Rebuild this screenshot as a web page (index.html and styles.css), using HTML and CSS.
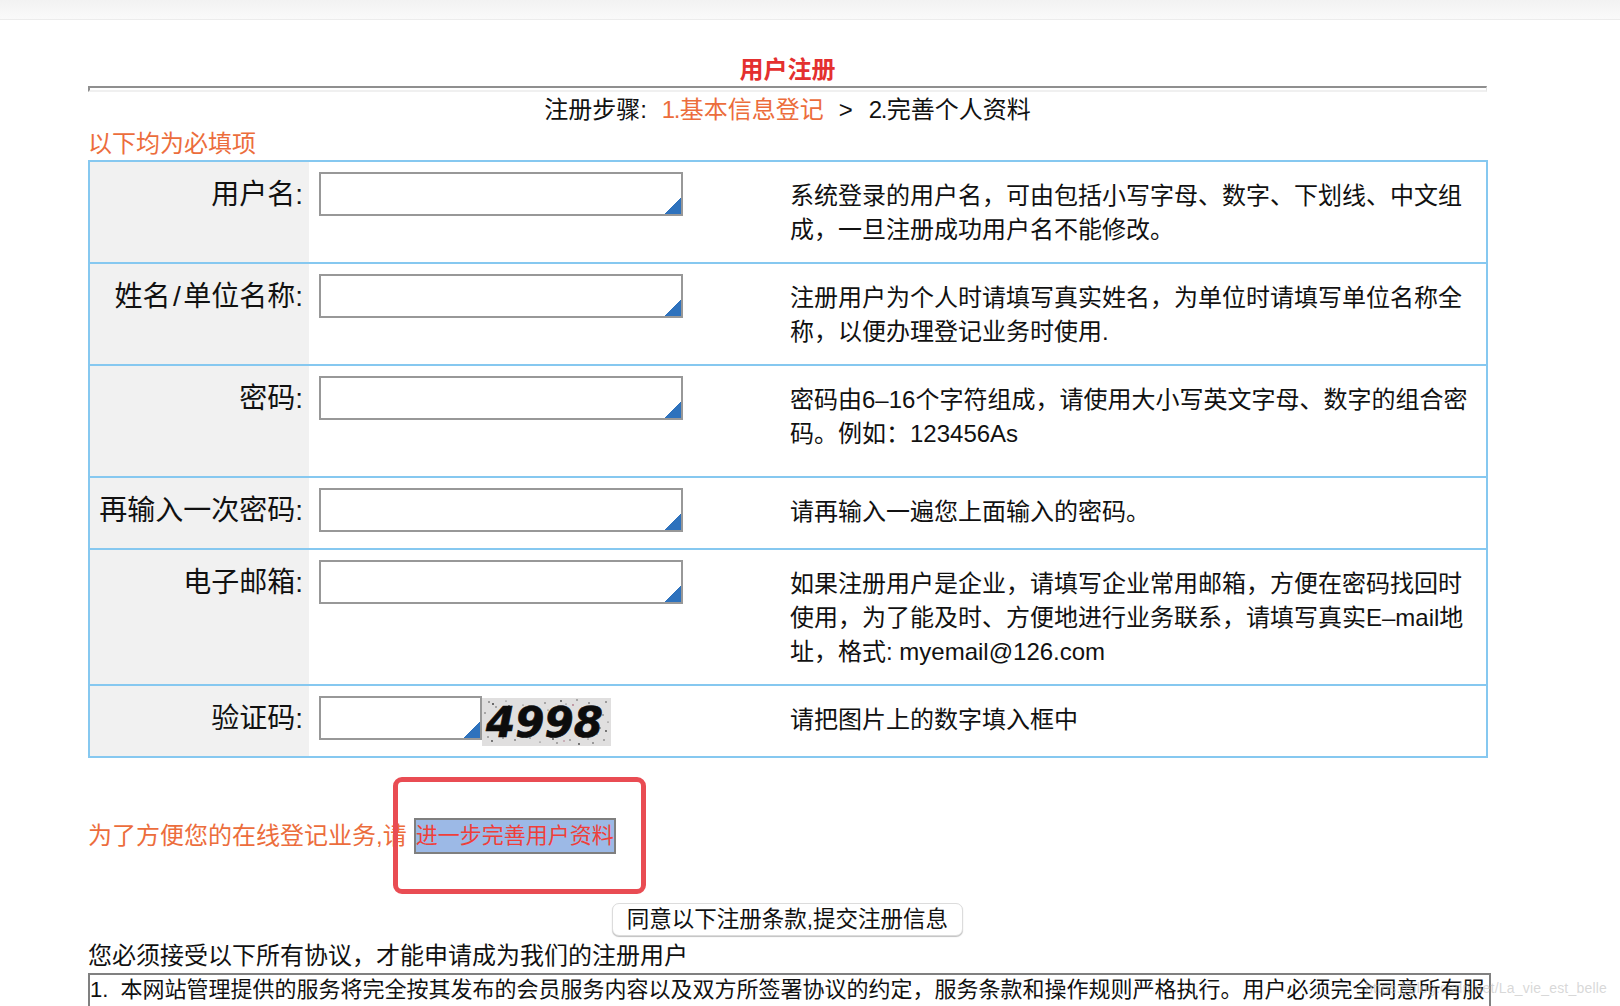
FILE: index.html
```html
<!DOCTYPE html>
<html lang="zh-CN">
<head>
<meta charset="utf-8">
<title>用户注册</title>
<link rel="stylesheet" href="styles.css">
</head>
<body>
<div class="topbar"></div>
<main class="page">
  <h1 class="title">用户注册</h1>
  <div class="rule"></div>
  <p class="steps">注册步骤:<span class="step-now"><span class="step-num">1.</span>基本信息登记</span><span class="step-sep">&gt;</span><span class="step-num">2.</span>完善个人资料</p>
  <p class="required">以下均为必填项</p>
  <table class="form">
    <colgroup><col class="col-label"><col class="col-input"><col class="col-desc"></colgroup>
    <tr class="r1">
      <th>用户名:</th>
      <td><input class="field" type="text"></td>
      <td class="desc">系统登录的用户名，可由包括小写字母、数字、下划线、中文组成，一旦注册成功用户名不能修改。</td>
    </tr>
    <tr class="r2">
      <th>姓名<span class="wide">/</span>单位名称:</th>
      <td><input class="field" type="text"></td>
      <td class="desc">注册用户为个人时请填写真实姓名，为单位时请填写单位名称全称，以便办理登记业务时使用.</td>
    </tr>
    <tr class="r3">
      <th>密码:</th>
      <td><input class="field" type="password"></td>
      <td class="desc">密码由6–16个字符组成，请使用大小写英文字母、数字的组合密码。例如：123456As</td>
    </tr>
    <tr class="r4">
      <th>再输入一次密码:</th>
      <td><input class="field" type="password"></td>
      <td class="desc">请再输入一遍您上面输入的密码。</td>
    </tr>
    <tr class="r5">
      <th>电子邮箱:</th>
      <td><input class="field" type="text"></td>
      <td class="desc">如果注册用户是企业，请填写企业常用邮箱，方便在密码找回时使用，为了能及时、方便地进行业务联系，请填写真实E–mail地址，格式: myemail@126.com</td>
    </tr>
    <tr class="r6">
      <th>验证码:</th>
      <td>
        <div class="captcha-row">
          <input class="field field-short" type="text">
          <svg class="captcha" width="129" height="48" viewBox="0 0 129 48">
            <rect width="129" height="48" fill="#e0dfdf"/>
            <g fill="#444">
              <circle cx="7" cy="4" r=".8"/><circle cx="11" cy="6" r="1"/><circle cx="14" cy="9" r=".7"/><circle cx="24" cy="3" r=".6"/><circle cx="27" cy="8" r=".9"/><circle cx="3" cy="15" r=".7"/><circle cx="41" cy="7" r=".6"/><circle cx="63" cy="5" r=".7"/><circle cx="79" cy="3" r=".9"/><circle cx="84" cy="6" r=".6"/><circle cx="95" cy="2" r=".7"/><circle cx="107" cy="5" r=".8"/><circle cx="114" cy="9" r=".7"/><circle cx="124" cy="4" r=".8"/><circle cx="121" cy="17" r=".7"/><circle cx="126" cy="24" r=".6"/><circle cx="118" cy="30" r=".8"/><circle cx="124" cy="33" r=".9"/><circle cx="115" cy="36" r=".6"/><circle cx="6" cy="39" r=".7"/><circle cx="10" cy="43" r=".9"/><circle cx="21" cy="40" r=".7"/><circle cx="33" cy="42" r=".8"/><circle cx="48" cy="40" r=".7"/><circle cx="58" cy="44" r=".6"/><circle cx="71" cy="41" r=".9"/><circle cx="75" cy="45" r=".7"/><circle cx="88" cy="42" r=".7"/><circle cx="97" cy="46" r=".9"/><circle cx="106" cy="41" r=".6"/><circle cx="111" cy="45" r=".8"/><circle cx="122" cy="42" r=".7"/><circle cx="38" cy="35" r=".6"/><circle cx="66" cy="12" r=".6"/>
            </g>
            <g fill="#b0788a">
              <circle cx="91" cy="7" r=".9"/><circle cx="100" cy="10" r=".8"/><circle cx="82" cy="43" r=".8"/><circle cx="103" cy="38" r=".8"/><circle cx="117" cy="12" r=".7"/>
            </g>
            <text class="captcha-text" x="4" y="39">4998</text>
          </svg>
        </div>
      </td>
      <td class="desc">请把图片上的数字填入框中</td>
    </tr>
  </table>
  <p class="notice">为了方便您的在线登记业务,请<span class="selected">进一步完善用户资料</span></p>
  <div class="actions"><button class="submit" type="button">同意以下注册条款,提交注册信息</button></div>
  <p class="agree">您必须接受以下所有协议，才能申请成为我们的注册用户</p>
  <div class="terms">1.&nbsp; 本网站管理提供的服务将完全按其发布的会员服务内容以及双方所签署协议的约定，服务条款和操作规则严格执行。用户必须完全同意所有服务条款</div>
  <div class="callout"></div>
</main>
<div class="watermark">https://blog.csdn.net/La_vie_est_belle</div>
</body>
</html>
```
FILE: styles.css
```css
html, body {
  margin: 0;
  height: 1006px;
  overflow: hidden;
  background: #fff;
}
body {
  position: relative;
  font-family: "Liberation Sans", "Noto Sans CJK SC", sans-serif;
  font-size: 24px;
  color: #111;
}
p, h1 { margin: 0; }

.topbar {
  height: 19px;
  background: linear-gradient(#f2f2f2, #fafafa);
  border-bottom: 1px solid #ececec;
}
.page {
  position: relative;
  width: 1399px;
  margin-left: 88px;
}
.title {
  padding-top: 32px;
  height: 34px;
  line-height: 36px;
  font-size: 24px;
  font-weight: bold;
  color: #e4302f;
  text-align: center;
}
.rule {
  box-sizing: border-box;
  height: 6px;
  border-top: 2px solid #8f8f8f;
  border-left: 2px solid #8f8f8f;
  border-bottom: 2px solid #f0f0f0;
  border-right: 1px solid #e4e4e4;
}
.steps {
  height: 36px;
  line-height: 36px;
  text-align: center;
}
.step-num { letter-spacing: -1.5px; margin-right: 1px; }
.step-now { color: #ec6d3c; margin-left: 15px; }
.step-sep { margin: 0 16px 0 15px; }
.required {
  height: 32px;
  line-height: 31px;
  color: #ec6d3c;
}
.form {
  width: 1400px;
  table-layout: fixed;
  border-collapse: collapse;
  border: 2px solid #86c8f0;
}
.form tr { border-bottom: 2px solid #86c8f0; }
.col-label { width: 220px; }
.col-input { width: 481px; }
.r1 { height: 102px; }
.r2 { height: 102px; }
.r3 { height: 112px; }
.r4 { height: 72px; }
.r5 { height: 136px; }
.r6 { height: 72px; }
.form th {
  background: #f1f1f1;
  font-size: 28px;
  font-weight: normal;
  text-align: right;
  vertical-align: top;
  padding: 10px 6px 0 0;
  line-height: 45px;
  white-space: nowrap;
}
.form td {
  vertical-align: top;
  padding: 10px 0 0 10px;
}
.form td.desc {
  padding: 17px 16px 0 0;
  line-height: 34px;
}
.wide { padding: 0 2.5px; }
.field {
  display: block;
  box-sizing: border-box;
  width: 364px;
  height: 44px;
  padding: 0 4px;
  border: 2px solid #989898;
  border-radius: 0;
  background: #fff linear-gradient(135deg, transparent 50%, #2e72bd 50%) no-repeat right bottom / 16px 16px;
  outline: none;
}
.field-short { width: 163px; }
.captcha-row {
  display: flex;
  align-items: flex-start;
}
.captcha { margin-top: 2px; flex: none; }
.captcha-text {
  font-family: "DejaVu Sans", sans-serif;
  font-size: 42px;
  font-weight: bold;
  font-style: italic;
  fill: #0c0c0c;
  stroke: #0c0c0c;
  stroke-width: 0.7px;
}
.notice {
  display: flex;
  align-items: flex-start;
  height: 36px;
  margin-top: 60px;
  line-height: 35px;
  color: #ec6d3c;
}
.selected {
  box-sizing: border-box;
  height: 36px;
  line-height: 32px;
  width: 202px;
  margin-left: 7px;
  border: 2px solid #7f7f7f;
  background: #9cb9e6;
  color: #ef3f3a;
  font-size: 22px;
  text-align: center;
  white-space: nowrap;
}
.actions {
  display: flex;
  justify-content: center;
  margin-top: 49px;
}
.submit {
  box-sizing: border-box;
  width: 351px;
  height: 33px;
  padding: 0;
  border: 1px solid #dcdcdc;
  border-radius: 7px;
  background: #fff;
  box-shadow: 0 1px 1px rgba(0, 0, 0, 0.25);
  font: inherit;
  font-size: 22.5px;
  line-height: 31px;
  color: #111;
}
.agree {
  height: 35px;
  padding-top: 2px;
  line-height: 35px;
}
.terms {
  box-sizing: border-box;
  width: 1403px;
  height: 61px;
  overflow: hidden;
  padding: 0;
  border: 2px solid #808080;
  font-size: 22px;
  line-height: 30px;
}
.callout {
  position: absolute;
  left: 305px;
  top: 757px;
  width: 253px;
  height: 117px;
  box-sizing: border-box;
  border: 5px solid #e94c53;
  border-radius: 9px;
}
.watermark {
  position: absolute;
  right: 13px;
  top: 979px;
  font-size: 14px;
  line-height: 18px;
  letter-spacing: 0.2px;
  color: rgba(190, 190, 190, 0.6);
  white-space: nowrap;
}
```
